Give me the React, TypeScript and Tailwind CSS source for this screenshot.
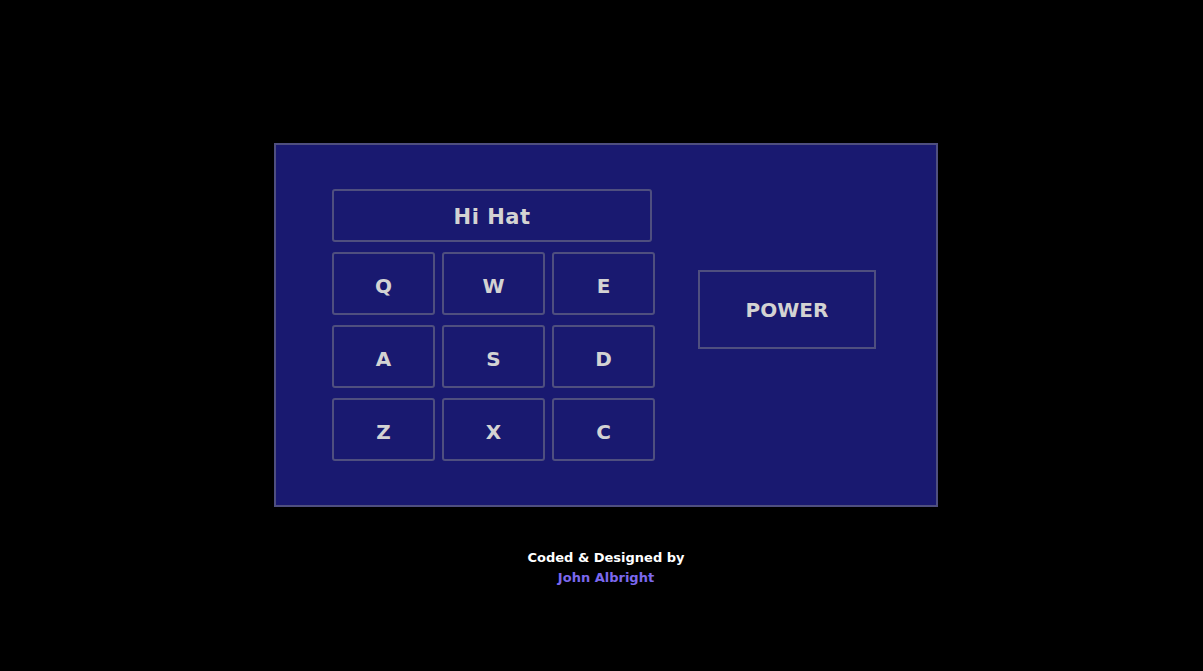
import React from "react";

const keys = ["Q", "W", "E", "A", "S", "D", "Z", "X", "C"];

export default function App() {
  return (
    <div
      className="min-h-[671px] w-full bg-black flex flex-col items-center pt-[143px] pl-[9px]"
      style={{ fontFamily: '"DejaVu Sans", "Liberation Sans", sans-serif' }}
    >
      <div className="w-[664px] h-[364px] bg-[#191970] border-2 border-[#4f4f7f] flex pl-[56px] pt-[44px]">
        <div className="flex flex-col w-[323px]">
          <div className="w-[320px] h-[53px] border-2 border-[#4f4f7f] rounded-[3px] flex items-center justify-center pt-[5px] text-[#d3d3d3] text-[21px] font-bold tracking-[0.5px]">
            Hi Hat
          </div>
          <div className="grid grid-cols-[103px_103px_103px] gap-x-[7px] gap-y-[10px] mt-[10px]">
            {keys.map((k) => (
              <div
                key={k}
                className="h-[63px] border-2 border-[#4f4f7f] rounded-[3px] flex items-center justify-center pt-[4px] text-[#d3d3d3] text-[20px] font-bold"
              >
                {k}
              </div>
            ))}
          </div>
        </div>
        <div className="ml-[43px] mt-[81px]">
          <div className="w-[178px] h-[79px] border-2 border-[#4f4f7f] flex items-center justify-center pt-[1px] text-[#d3d3d3] text-[20px] font-bold">
            POWER
          </div>
        </div>
      </div>
      <div className="mt-[41px] flex flex-col items-center text-[13px] font-bold leading-[20px]">
        <div className="text-white">Coded &amp; Designed by</div>
        <div className="text-[#7b68ee]">John Albright</div>
      </div>
    </div>
  );
}
